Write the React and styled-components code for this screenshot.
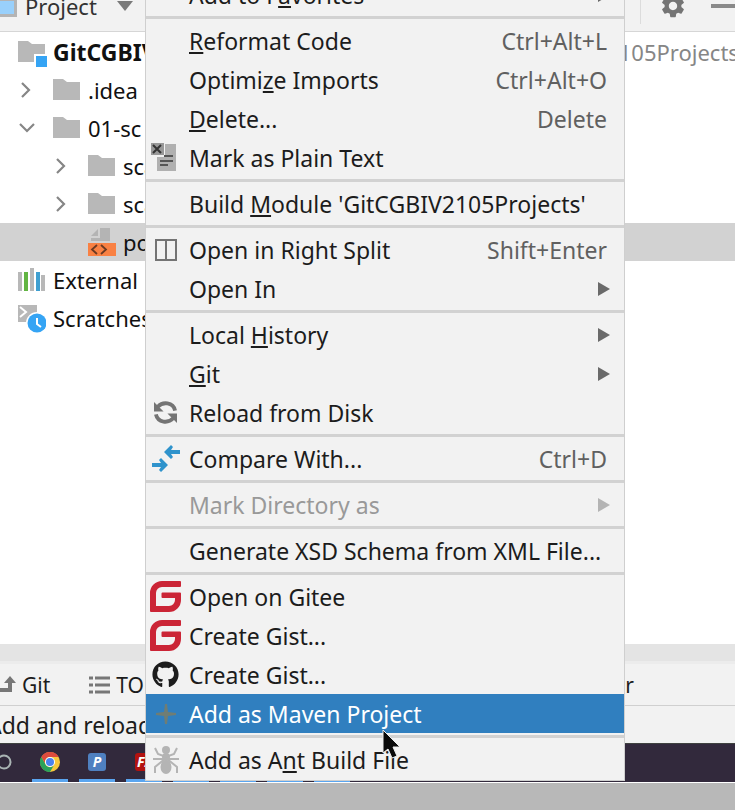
import React, { useState } from 'react';
import styled, { createGlobalStyle } from 'styled-components';
import { FaGithub } from 'react-icons/fa';
import { MdSettings } from 'react-icons/md';

const GlobalStyle = createGlobalStyle`
  * {
    box-sizing: border-box;
  }
  body {
    margin: 0;
    overflow: hidden;
    background: #b8b8b8;
    font-family: "Noto Sans", "Open Sans", sans-serif;
    font-size: 22px;
    line-height: 30px;
    color: #1c1c1c;
  }
  button {
    border: 0;
    padding: 0;
    background: none;
    font: inherit;
    color: inherit;
    text-align: left;
    white-space: nowrap;
  }
  svg {
    display: block;
    flex: none;
  }
`;

const Screen = styled.div`
  position: relative;
  display: flex;
  flex-direction: column;
  height: 100vh;
  overflow: hidden;
`;

const ToolHeader = styled.header`
  flex: none;
  display: flex;
  align-items: center;
  height: 52px;
  margin-top: -20px;
  background: #f2f2f2;
  border-bottom: 1px solid #d6d6d6;
`;

const ProjectSelect = styled.button`
  display: flex;
  align-items: center;
  gap: 8px;
  color: #333;
`;

const ProjectLabel = styled.span`
  margin-right: 12px;
`;

const HeaderTools = styled.div`
  display: flex;
  align-items: center;
  gap: 24px;
  height: 36px;
  margin-left: auto;
  padding-left: 18px;
  border-left: 1px solid #dcdcdc;
`;

const IconButton = styled.button`
  color: #757575;
`;

const Tree = styled.div`
  flex: 1;
  min-height: 0;
  padding-top: 1px;
  background: #fff;
`;

const TreeRow = styled.div`
  display: flex;
  align-items: center;
  gap: 7px;
  height: 38px;
  padding-left: ${({ $level }) => 18 + $level * 35}px;
  background: ${({ $selected }) => ($selected ? '#d2d2d2' : 'transparent')};
  white-space: nowrap;
  color: #111;
`;

const ProjectName = styled.span`
  font-size: 23px;
  font-weight: 700;
`;

const Toggle = styled.button`
  width: 28px;
  margin-left: -35px;
`;

const Path = styled.span`
  margin-left: 177px;
  color: #868686;
`;

const Stripe = styled.div`
  flex: none;
  height: 20px;
  background: #e4e4e4;
  border-bottom: 3px solid #ececec;
`;

const ToolBar = styled.nav`
  flex: none;
  display: flex;
  align-items: center;
  gap: 39px;
  height: 42px;
  background: #f2f2f2;
  border-bottom: 1px solid #d0d0d0;
`;

const ToolButton = styled.button`
  display: flex;
  align-items: center;
  gap: 6px;
  font-size: 21px;
`;

const StatusBar = styled.footer`
  flex: none;
  height: 37px;
  margin-left: -13px;
  padding-top: 4px;
  background: #f2f2f2;
  font-size: 23px;
  white-space: nowrap;
`;

const TaskBar = styled.div`
  flex: none;
  display: flex;
  gap: 11px;
  height: 39px;
  background: #32293c;
  border-top: 1px solid #3f4240;
`;

const TaskItem = styled.button`
  display: flex;
  align-items: center;
  justify-content: center;
  width: 36px;
  border-bottom: 3px solid ${({ $open }) => ($open ? '#5aa5ef' : 'transparent')};
`;

const Cortana = styled(TaskItem)`
  width: 21px;
  justify-content: flex-start;
`;

const Badge = styled.span`
  width: 18px;
  height: 18px;
  border-radius: 3px;
  background: ${({ $color }) => $color};
  color: #fff;
  font-size: 14px;
  font-style: italic;
  font-weight: 700;
  line-height: 18px;
  text-align: center;
`;

const Letterbox = styled.div`
  flex: none;
  height: 28px;
  background: #b8b8b8;
  border-top: 1px solid #fff;
`;

const Menu = styled.div`
  position: absolute;
  top: -25px;
  left: 145px;
  width: 480px;
  padding-bottom: 1px;
  background: #f2f2f2;
  border: 1px solid #cfcfcf;
  border-top: 0;
  font-size: 23px;
`;

const MenuItem = styled.button`
  display: flex;
  align-items: center;
  width: 100%;
  height: 39px;
  padding-right: 14px;
  background: ${({ $active }) => ($active ? '#307fbf' : 'transparent')};
  color: ${({ $active }) => ($active ? '#fff' : '#1c1c1c')};

  &:disabled {
    color: #999;
  }
`;

const IconSlot = styled.span`
  display: flex;
  justify-content: center;
  width: 39px;
  margin-right: 4px;
`;

const Shortcut = styled.span`
  margin-left: auto;
  margin-right: 3px;
  color: #606060;
`;

const Arrow = styled.svg`
  margin-left: auto;
  fill: ${({ $dim }) => ($dim ? '#b4b4b4' : '#6a6a6a')};
`;

const Mnemonic = styled.span`
  text-decoration: underline;
  text-decoration-thickness: 2px;
  text-underline-offset: 2px;
  text-decoration-skip-ink: none;
`;

const Separator = styled.hr`
  height: 7px;
  margin: 0;
  border: solid #f2f2f2;
  border-width: 2px 0;
  background: #d2d2d2;
`;

const Cursor = styled.svg`
  position: absolute;
  top: 729px;
  left: 382px;
`;

const FolderIcon = ({ module }) => (
  <svg width="28" height="28" viewBox="0 0 28 28" overflow="visible">
    <path d="M0 3h10l4 3h13v18H0z" fill="#b8b8b8" />
    {module && <path d="M16 16h13v13H16z" fill="#fff" />}
    {module && <path d="M18 18h11v11H18z" fill="#35a4f4" />}
  </svg>
);

const XmlIcon = () => (
  <svg width="28" height="30" viewBox="0 0 28 30">
    <path d="M12 1h10v13H3v-3h9z" fill="#b4b4b4" />
    <path d="M10 2v7H3z" fill="#b4b4b4" />
    <path d="M0 16h28v13H0z" fill="#f98143" />
    <path d="M9 18l-5 4.500 5 4.500M13 18l5 4.500-5 4.500" fill="none" stroke="#6b3a23" strokeWidth="1.800" />
  </svg>
);

const LibraryIcon = () => (
  <svg width="28" height="28" viewBox="0 0 28 28">
    <path d="M0 6h4v19H0zM12 2h4v23h-4zM23 9h4v16h-4z" fill="#b8b8b8" />
    <path d="M6 6h4v19H6z" fill="#62b543" />
    <path d="M18 6h4v19h-4z" fill="#3f9fd0" />
  </svg>
);

const ScratchIcon = () => (
  <svg width="28" height="30" viewBox="0 0 28 30">
    <path d="M0 2h19v7L9 19H0z" fill="#b8b8b8" />
    <path d="M2 4l6 5-6 5" fill="none" stroke="#fff" strokeWidth="2" />
    <circle cx="19" cy="20" r="11" fill="#fff" />
    <circle cx="19" cy="20" r="9.500" fill="#35a4f4" />
    <path d="M19 15v6l4 3" fill="none" stroke="#fff" strokeWidth="2" />
  </svg>
);

const Chevron = ({ open }) => (
  <svg width="20" height="20" viewBox="0 0 20 20" fill="none" stroke="#868686" strokeWidth="2.200">
    {open ? <path d="M2 6l7 7 7-7" /> : <path d="M4 3l7 7-7 7" />}
  </svg>
);

const PlainTextIcon = () => (
  <svg width="28" height="30" viewBox="0 0 28 30" overflow="visible">
    <path d="M13 1h11v27H5V14h8z" fill="#b0b0b0" />
    <path d="M-1 0h13v12H-1z" fill="#989898" />
    <path d="M1 2l8 8M9 2l-8 8" stroke="#333" strokeWidth="2" />
    <path d="M12 13h9M8 18h13M8 22h8" stroke="#555" strokeWidth="2" />
  </svg>
);

const SplitIcon = () => (
  <svg width="22" height="22" viewBox="0 0 22 22" fill="none" stroke="#747474" strokeWidth="2">
    <path d="M1 1h20v20H1zM11 1v20" />
  </svg>
);

const ReloadIcon = () => (
  <svg width="25" height="23" viewBox="0 0 26 24">
    <path d="M1 1v10h10z" fill="#747474" />
    <path d="M25 23V13H15z" fill="#747474" />
    <path d="M5 6C10 .500 21 1 23 10M21 18C16 23.500 5 23 3 14" fill="none" stroke="#747474" strokeWidth="4" />
  </svg>
);

const CompareIcon = () => (
  <svg width="28" height="27" viewBox="0 0 28 27" fill="#2f93cc">
    <path d="M12 7l7-7 2 2-2 3h9v4h-9l2 3-2 2zM16 20l-7 7-2-2 2-3H0v-4h9l-2-3 2-2z" />
  </svg>
);

const GiteeIcon = () => (
  <svg width="31" height="31" viewBox="0 0 31 31">
    <path
      d="M30 0q1 0 1 1v4q0 1-1 1H12a6 6 0 0 0-6 6v13h13a6 6 0 0 0 6-6v-2H12.500q-1 0-1-1v-3.400q0-1 1-1H30q1 0 1 1V19a12 12 0 0 1-12 12H1q-1 0-1-1V12A12 12 0 0 1 12 0z"
      fill="#cb2536"
    />
  </svg>
);

const PlusIcon = () => (
  <svg width="20" height="20" viewBox="0 0 20 20">
    <path d="M9 0h2l1 8 8 1v2l-8 1-1 8H9l-1-8-8-1V9l8-1z" fill="#6f7d74" />
  </svg>
);

const AntIcon = () => (
  <svg width="26" height="28" viewBox="0 0 26 28">
    <g fill="#b4b4b4">
      <circle cx="13" cy="4" r="4" />
      <ellipse cx="13" cy="11" rx="4" ry="4" />
      <ellipse cx="13" cy="21" rx="5.500" ry="7" />
    </g>
    <path
      d="M2 2l3 6 8 3 8-3 3-6M0 13h26M2 27v-6l11-9 11 9v6"
      fill="none"
      stroke="#b4b4b4"
      strokeWidth="2"
    />
  </svg>
);

const ChromeIcon = () => (
  <svg width="20" height="20" viewBox="0 0 20 20">
    <circle cx="10" cy="10" r="10" fill="#f7c83c" />
    <path d="M1.300 5A10 10 0 0 1 18.700 5H10a5 5 0 0 0-4.400 7.500z" fill="#dd4b3e" />
    <path d="M1.300 5A10 10 0 0 0 10 20l4.400-7.500a5 5 0 0 1-8.800 0z" fill="#2ba25a" />
    <circle cx="10" cy="10" r="5" fill="#fff" />
    <circle cx="10" cy="10" r="4" fill="#4a83ee" />
  </svg>
);

const menuGroups = [
  [{ label: 'Add to F|a|vorites', sub: true }],
  [
    { label: '|R|eformat Code', keys: 'Ctrl+Alt+L' },
    { label: 'Optimi|z|e Imports', keys: 'Ctrl+Alt+O' },
    { label: '|D|elete...', keys: 'Delete' },
    { label: 'Mark as Plain Text', icon: <PlainTextIcon /> },
  ],
  [{ label: "Build |M|odule 'GitCGBIV2105Projects'" }],
  [
    { label: 'Open in Right Split', icon: <SplitIcon />, keys: 'Shift+Enter' },
    { label: 'Open In', sub: true },
  ],
  [
    { label: 'Local |H|istory', sub: true },
    { label: '|G|it', sub: true },
    { label: 'Reload from Disk', icon: <ReloadIcon /> },
  ],
  [{ label: 'Compare With...', icon: <CompareIcon />, keys: 'Ctrl+D' }],
  [{ label: 'Mark Directory as', sub: true, disabled: true }],
  [{ label: 'Generate XSD Schema from XML File...' }],
  [
    { label: 'Open on Gitee', icon: <GiteeIcon /> },
    { label: 'Create Gist...', icon: <GiteeIcon /> },
    { label: 'Create Gist...', icon: <FaGithub size={27} /> },
    { label: 'Add as Maven Project', icon: <PlusIcon /> },
  ],
  [{ label: 'Add as A|n|t Build File', icon: <AntIcon /> }],
];

// the letter between two bars is the mnemonic
const MenuLabel = ({ text }) => {
  const [before, key, after] = text.split('|');
  return (
    <span>
      {before}
      {key && <Mnemonic>{key}</Mnemonic>}
      {after}
    </span>
  );
};

const ContextMenu = () => {
  const [active, setActive] = useState('Add as Maven Project');

  return (
    <Menu role="menu">
      {menuGroups.map((group, index) => (
        <React.Fragment key={index}>
          {index > 0 && <Separator />}
          {group.map((item, i) => (
            <MenuItem
              key={i}
              role="menuitem"
              disabled={item.disabled}
              $active={item.label === active}
              onMouseEnter={() => setActive(item.label)}
            >
              <IconSlot>{item.icon}</IconSlot>
              <MenuLabel text={item.label} />
              {item.keys && <Shortcut>{item.keys}</Shortcut>}
              {item.sub && (
                <Arrow $dim={item.disabled} width="12" height="14" viewBox="0 0 12 14">
                  <path d="M0 0l12 7-12 7z" />
                </Arrow>
              )}
            </MenuItem>
          ))}
        </React.Fragment>
      ))}
    </Menu>
  );
};

const ProjectTree = () => {
  return (
    <Tree role="tree">
      <TreeRow role="treeitem" $level={0}>
        <FolderIcon module />
        <ProjectName>GitCGBIV2105Projects</ProjectName>
        <Path>E:\GitCGBIV2105Projects</Path>
      </TreeRow>
      <TreeRow role="treeitem" $level={1}>
        <Toggle aria-label="Expand"><Chevron /></Toggle>
        <FolderIcon />
        .idea
      </TreeRow>
      <TreeRow role="treeitem" $level={1}>
        <Toggle aria-label="Collapse"><Chevron open /></Toggle>
        <FolderIcon />
        01-sc
      </TreeRow>
      <TreeRow role="treeitem" $level={2}>
        <Toggle aria-label="Expand"><Chevron /></Toggle>
        <FolderIcon />
        sca
      </TreeRow>
      <TreeRow role="treeitem" $level={2}>
        <Toggle aria-label="Expand"><Chevron /></Toggle>
        <FolderIcon />
        sca
      </TreeRow>
      <TreeRow role="treeitem" $level={2} $selected>
        <XmlIcon />
        pom.xml
      </TreeRow>
      <TreeRow role="treeitem" $level={0}>
        <LibraryIcon />
        External Libraries
      </TreeRow>
      <TreeRow role="treeitem" $level={0}>
        <ScratchIcon />
        Scratches and Consoles
      </TreeRow>
    </Tree>
  );
};

const App = () => {
  return (
    <Screen>
      <GlobalStyle />
      <ToolHeader>
        <ProjectSelect>
          <svg width="17" height="24" viewBox="0 0 17 24">
            <path d="M0 0h17v23H0z" fill="#b4b4b4" />
            <path d="M0 7h14v13H0z" fill="#99d0fb" />
          </svg>
          <ProjectLabel>Project</ProjectLabel>
          <svg width="16" height="10" viewBox="0 0 16 10">
            <path d="M0 0h16l-8 10z" fill="#7a7a7a" />
          </svg>
        </ProjectSelect>
        <HeaderTools>
          <IconButton aria-label="Settings"><MdSettings size={28} /></IconButton>
          <IconButton aria-label="Hide">
            <svg width="24" height="4" viewBox="0 0 24 4"><path d="M0 0h24v4H0z" fill="#8a8a8a" /></svg>
          </IconButton>
        </HeaderTools>
      </ToolHeader>
      <ProjectTree />
      <Stripe />
      <ToolBar>
        <ToolButton>
          <svg width="16" height="20" viewBox="0 0 16 20">
            <path d="M0 15h10V6" fill="none" stroke="#777" strokeWidth="4" />
            <path d="M4 8l6-7 6 7z" fill="#777" />
          </svg>
          Git
        </ToolButton>
        <ToolButton>
          <svg width="21" height="18" viewBox="0 0 21 18">
            <path d="M0 2h4M6 2h15M0 9h4M6 9h15M0 16h4M6 16h15" stroke="#777" strokeWidth="3" />
          </svg>
          TODO
        </ToolButton>
        <ToolButton>Problems</ToolButton>
        <ToolButton>Terminal</ToolButton>
        <ToolButton>Build</ToolButton>
        <ToolButton>Profiler</ToolButton>
      </ToolBar>
      <StatusBar>Add and reload Maven project</StatusBar>
      <TaskBar>
        <Cortana aria-label="Search">
          <svg width="12" height="16" viewBox="0 0 12 16">
            <circle cx="4" cy="8" r="6.500" fill="none" stroke="#aab4b4" strokeWidth="2" />
          </svg>
        </Cortana>
        <TaskItem $open aria-label="Chrome"><ChromeIcon /></TaskItem>
        <TaskItem $open><Badge $color="#4f80c0">P</Badge></TaskItem>
        <TaskItem $open><Badge $color="#b3120f">Fz</Badge></TaskItem>
        <TaskItem $open />
        <TaskItem $open />
        <TaskItem $open />
        <TaskItem $open />
      </TaskBar>
      <Letterbox />
      <ContextMenu />
      <Cursor width="20" height="32" viewBox="0 0 20 32">
        <path d="M1 1v23l5-4 4 9 5-2-4-9h7z" fill="#0a0a0a" stroke="#eee" strokeWidth="1" />
      </Cursor>
    </Screen>
  );
};

export default App;
